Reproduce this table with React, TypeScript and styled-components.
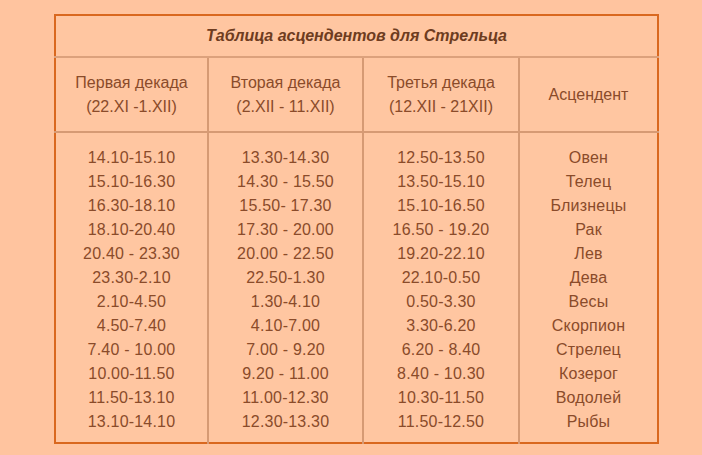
import styled, { createGlobalStyle } from 'styled-components';

const GlobalStyle = createGlobalStyle`
  html, body {
    margin: 0;
    padding: 0;
    background: #ffc49f;
  }
  body {
    font-family: "Liberation Sans", Arial, sans-serif;
  }
`;

const columns = [
  {
    title: ['Первая декада', '(22.XI -1.XII)'],
    rows: [
      '14.10-15.10', '15.10-16.30', '16.30-18.10', '18.10-20.40', '20.40 - 23.30', '23.30-2.10',
      '2.10-4.50', '4.50-7.40', '7.40 - 10.00', '10.00-11.50', '11.50-13.10', '13.10-14.10',
    ],
  },
  {
    title: ['Вторая декада', '(2.XII - 11.XII)'],
    rows: [
      '13.30-14.30', '14.30 - 15.50', '15.50- 17.30', '17.30 - 20.00', '20.00 - 22.50', '22.50-1.30',
      '1.30-4.10', '4.10-7.00', '7.00 - 9.20', '9.20 - 11.00', '11.00-12.30', '12.30-13.30',
    ],
  },
  {
    title: ['Третья декада', '(12.XII - 21XII)'],
    rows: [
      '12.50-13.50', '13.50-15.10', '15.10-16.50', '16.50 - 19.20', '19.20-22.10', '22.10-0.50',
      '0.50-3.30', '3.30-6.20', '6.20 - 8.40', '8.40 - 10.30', '10.30-11.50', '11.50-12.50',
    ],
  },
  {
    title: ['Асцендент'],
    rows: [
      'Овен', 'Телец', 'Близнецы', 'Рак', 'Лев', 'Дева',
      'Весы', 'Скорпион', 'Стрелец', 'Козерог', 'Водолей', 'Рыбы',
    ],
  },
];

const widths = [153, 155, 156, 139];

const Page = styled.div`
  padding: 14px 0 0 54px;
`;

const Table = styled.table`
  border-collapse: collapse;
  border: 2px solid #d9681f;
  background: #ffc6a1;
  color: #8a4b2a;
  font-family: "Liberation Sans", Arial, sans-serif;
  table-layout: fixed;
  width: 603px;
`;

const Caption = styled.th`
  height: 40px;
  padding: 0;
  font-size: 16px;
  font-weight: bold;
  font-style: italic;
  color: #6e3c20;
  text-align: center;
  vertical-align: middle;
  border-bottom: 2px solid #dca17c;
`;

const HeadCell = styled.th`
  height: 73px;
  padding: 0;
  font-size: 16px;
  font-weight: normal;
  line-height: 24px;
  text-align: center;
  vertical-align: middle;
  border-bottom: 2px solid #d69a74;
  & + & {
    border-left: 2px solid #d69a74;
  }
`;

const BodyCell = styled.td`
  height: 311px;
  box-sizing: border-box;
  padding: 13px 0 0;
  text-align: center;
  vertical-align: top;
  & + & {
    border-left: 2px solid #d69a74;
  }
`;

const Line = styled.div`
  font-size: 16px;
  line-height: 24px;
  letter-spacing: 0.2px;
  white-space: nowrap;
`;

export default function App() {
  return (
    <Page>
      <GlobalStyle />
      <Table>
        <colgroup>
          {widths.map((w, i) => (
            <col key={i} style={{ width: w }} />
          ))}
        </colgroup>
        <thead>
          <tr>
            <Caption colSpan={4}>Таблица асцендентов для Стрельца</Caption>
          </tr>
          <tr>
            {columns.map((c, i) => (
              <HeadCell key={i}>
                {c.title.map((t) => (
                  <div key={t}>{t}</div>
                ))}
              </HeadCell>
            ))}
          </tr>
        </thead>
        <tbody>
          <tr>
            {columns.map((c, i) => (
              <BodyCell key={i}>
                {c.rows.map((r, j) => (
                  <Line key={j}>{r}</Line>
                ))}
              </BodyCell>
            ))}
          </tr>
        </tbody>
      </Table>
    </Page>
  );
}
